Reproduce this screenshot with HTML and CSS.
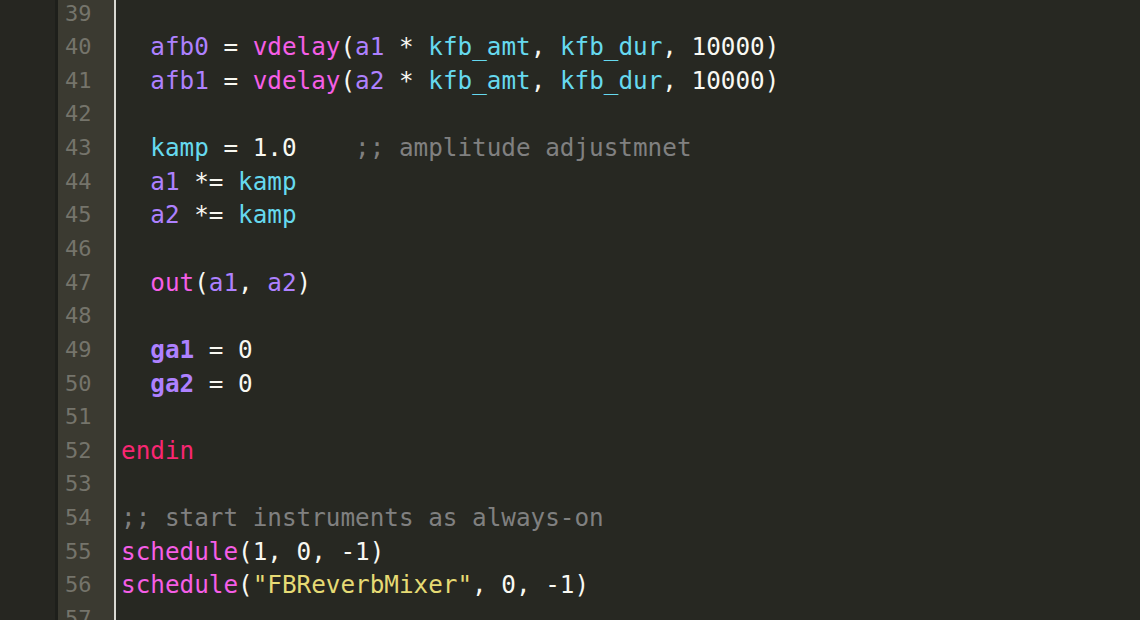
FILE: index.html
```html
<!DOCTYPE html>
<html>
<head>
<meta charset="utf-8">
<link rel="stylesheet" href="styles.css">
</head>
<body>
<div class="editor">
  <div class="side"></div>
  <div class="sep"></div>
  <div class="gutter">
    <div class="lines">
      <div class="ln">39</div><div class="ln">40</div><div class="ln">41</div><div class="ln">42</div>
      <div class="ln">43</div><div class="ln">44</div><div class="ln">45</div><div class="ln">46</div>
      <div class="ln">47</div><div class="ln">48</div><div class="ln">49</div><div class="ln">50</div>
      <div class="ln">51</div><div class="ln">52</div><div class="ln">53</div><div class="ln">54</div>
      <div class="ln">55</div><div class="ln">56</div><div class="ln">57</div>
    </div>
  </div>
  <div class="code">
    <div class="lines">
<div class="cl"> </div>
<div class="cl">  <span class="v">afb0</span> = <span class="f">vdelay</span>(<span class="v">a1</span> * <span class="k">kfb_amt</span>, <span class="k">kfb_dur</span>, 10000)</div>
<div class="cl">  <span class="v">afb1</span> = <span class="f">vdelay</span>(<span class="v">a2</span> * <span class="k">kfb_amt</span>, <span class="k">kfb_dur</span>, 10000)</div>
<div class="cl"> </div>
<div class="cl">  <span class="k">kamp</span> = 1.0    <span class="c">;; amplitude adjustmnet</span></div>
<div class="cl">  <span class="v">a1</span> *= <span class="k">kamp</span></div>
<div class="cl">  <span class="v">a2</span> *= <span class="k">kamp</span></div>
<div class="cl"> </div>
<div class="cl">  <span class="f">out</span>(<span class="v">a1</span>, <span class="v">a2</span>)</div>
<div class="cl"> </div>
<div class="cl">  <span class="g">ga1</span> = 0</div>
<div class="cl">  <span class="g">ga2</span> = 0</div>
<div class="cl"> </div>
<div class="cl"><span class="kw">endin</span></div>
<div class="cl"> </div>
<div class="cl"><span class="c">;; start instruments as always-on</span></div>
<div class="cl"><span class="f">schedule</span>(1, 0, -1)</div>
<div class="cl"><span class="f">schedule</span>(<span class="s">"FBReverbMixer"</span>, 0, -1)</div>
<div class="cl"> </div>
    </div>
  </div>
</div>
</body>
</html>
```

FILE: styles.css
```css
html, body {
  margin: 0;
  padding: 0;
  width: 1140px;
  height: 620px;
  overflow: hidden;
  background: #272822;
}
.editor {
  display: flex;
  width: 1140px;
  height: 620px;
  overflow: hidden;
  font-family: "DejaVu Sans Mono", "Liberation Mono", monospace;
  font-size: 24.3px;
}
.side {
  width: 55px;
  flex: none;
  background: #262621;
}
.sep {
  width: 3px;
  flex: none;
  background: #1e1f1b;
}
.gutter {
  width: 56px;
  flex: none;
  background: #3b3a31;
  border-right: 2px solid #d8d8d2;
  overflow: hidden;
}
.lines {
  margin-top: -3.5px;
}
.ln {
  height: 33.65px;
  line-height: 33.65px;
  padding-left: 7px;
  color: #75746b;
  font-size: 22px;
}
.code {
  flex: 1;
  padding-left: 5px;
  overflow: hidden;
}
.cl {
  height: 33.65px;
  line-height: 33.65px;
  white-space: pre;
  color: #f8f8f2;
}
.v { color: #ae81ff; }
.g { color: #ae81ff; font-weight: bold; }
.f { color: #f55ee6; }
.k { color: #66d9ef; }
.kw { color: #f92672; }
.c { color: #808080; }
.s { color: #e6db74; }
```
